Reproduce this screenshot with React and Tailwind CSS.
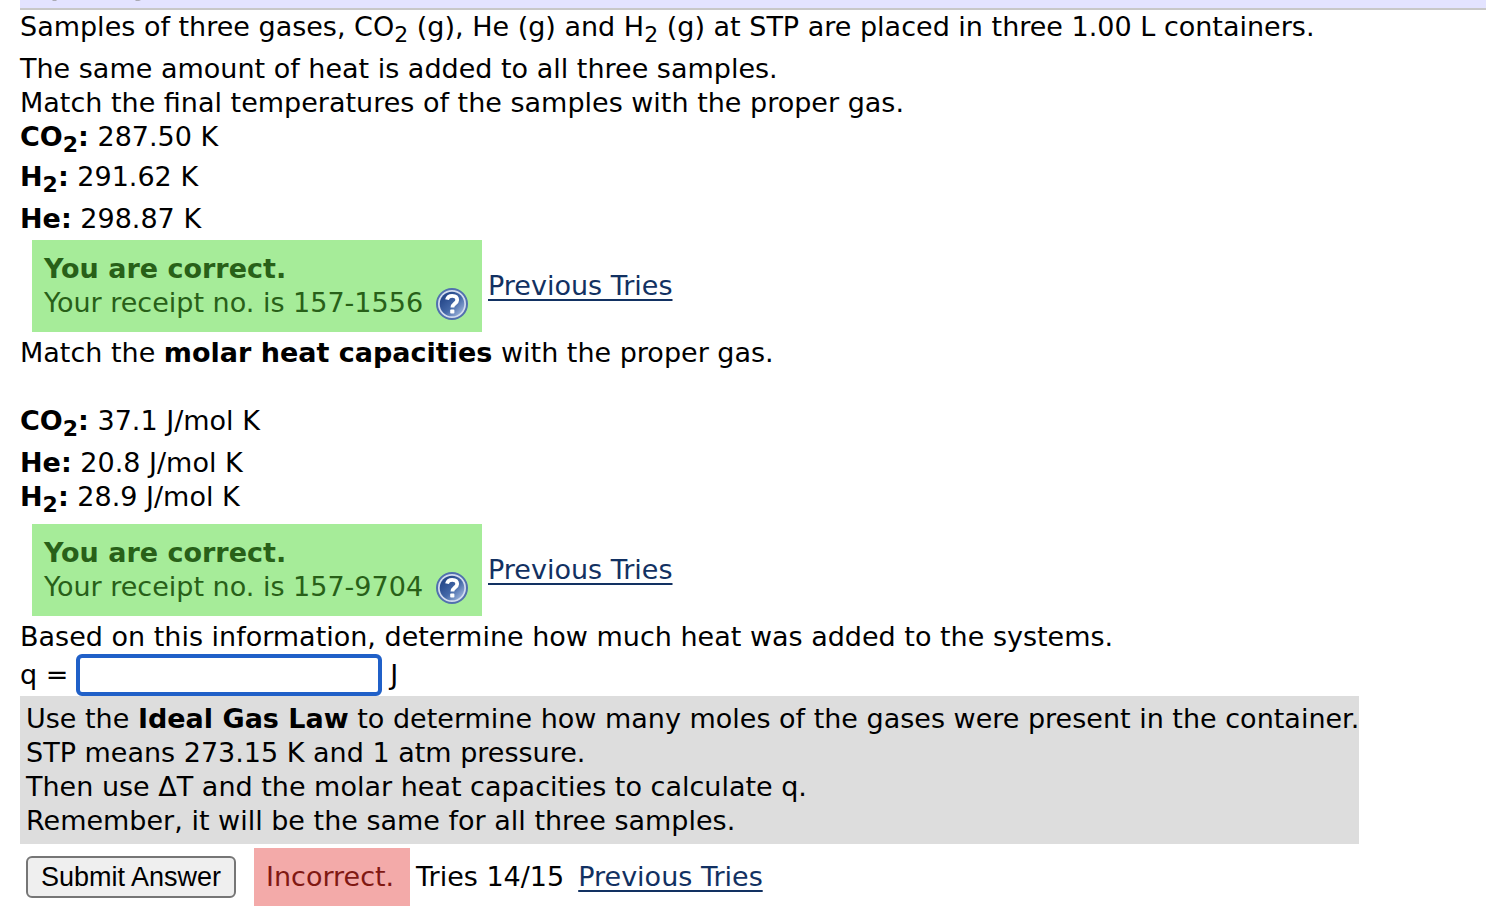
import { useId } from "react";

function Formula({ base, sub }) {
  return (
    <>
      {base}
      {sub && <sub className="relative bottom-0 align-[-6px] text-[22px] leading-none">{sub}</sub>}
    </>
  );
}

function Match({ base, sub, value, className }) {
  return (
    <p className={className}>
      <b>
        <Formula base={base} sub={sub} />:
      </b>{" "}
      {value}
    </p>
  );
}

function HelpIcon() {
  const id = useId();
  return (
    <svg viewBox="0 0 32 32" className="size-8" aria-hidden="true">
      <defs>
        <linearGradient id={id} x1="0" y1="0" x2="1" y2="1">
          <stop offset="0.2" stopColor="#284a8c" />
          <stop offset="0.55" stopColor="#4468a8" />
          <stop offset="0.9" stopColor="#9db4dc" />
        </linearGradient>
      </defs>
      <circle cx="16" cy="16" r="15" fill="#d3dcef" stroke="#5170ae" strokeWidth="2" />
      <circle cx="16" cy="16" r="12.3" fill={`url(#${id})`} />
      <path
        d="M11 11.6C11.6 9 13.400 7.800 16.200 7.800c3.200 0 5 1.600 5 4.100 0 3.500-4.800 3.700-4.800 7.600"
        fill="none"
        stroke="#fff"
        strokeWidth="3.800"
      />
      <rect x="14.200" y="21.600" width="4.200" height="4" rx="0.800" fill="#fff" />
    </svg>
  );
}

function PreviousTries() {
  return (
    <a href="#tries" className="text-[#123162] underline decoration-2 underline-offset-4">
      Previous Tries
    </a>
  );
}

function Correct({ receipt }) {
  return (
    <div className="my-1 ml-3 flex items-center gap-1.5">
      <div className="w-[450px] bg-[#a6ec99] px-3 py-3 pr-3.5 text-[#286018]">
        <p className="font-bold">You are correct.</p>
        <p className="flex justify-between">
          Your receipt no. is {receipt}
          <a href="#help" aria-label="Help" className="mt-0.5">
            <HelpIcon />
          </a>
        </p>
      </div>
      <PreviousTries />
    </div>
  );
}

export default function App() {
  return (
    <main className="min-h-screen bg-white pl-5 font-['DejaVu_Sans',Verdana,sans-serif] text-[27px] leading-[34px] text-black">
      <header className="h-2.5 border-b-2 border-[#c8c8c8] bg-[#e3e3ff]">
        <svg viewBox="0 0 130 8" className="h-2 w-[130px]" aria-hidden="true">
          <path d="M32 0h5l-1 1h-3zM115 0h6l-2 1h-3z" fill="#aaaab4" />
        </svg>
      </header>
      <p className="min-h-[42px]">
        Samples of three gases, <Formula base="CO" sub="2" /> (g), He (g) and <Formula base="H" sub="2" /> (g) at STP
        are placed in three 1.00 L containers.
      </p>
      <p>The same amount of heat is added to all three samples.</p>
      <p>Match the final temperatures of the samples with the proper gas.</p>
      <Match base="CO" sub="2" value="287.50 K" className="min-h-10" />
      <Match base="H" sub="2" value="291.62 K" className="min-h-[42px]" />
      <Match base="He" value="298.87 K" />
      <Correct receipt="157-1556" />
      <p className="mb-[34px]">
        Match the <b>molar heat capacities</b> with the proper gas.
      </p>
      <Match base="CO" sub="2" value="37.1 J/mol K" className="min-h-[42px]" />
      <Match base="He" value="20.8 J/mol K" />
      <Match base="H" sub="2" value="28.9 J/mol K" className="min-h-10" />
      <Correct receipt="157-9704" />
      <p>Based on this information, determine how much heat was added to the systems.</p>
      <form onSubmit={(e) => e.preventDefault()}>
        <div className="flex items-center gap-2">
          <label htmlFor="q">q =</label>
          <input
            id="q"
            type="text"
            className="h-[42px] w-[306px] rounded-md border-4 border-[#2060c8] bg-white px-1 outline-none"
          />
          <span>J</span>
        </div>
        <div className="w-fit bg-[#dddddd] py-1.5 pl-1.5">
          <p>
            Use the <b>Ideal Gas Law</b> to determine how many moles of the gases were present in the container.
          </p>
          <p>STP means 273.15 K and 1 atm pressure.</p>
          <p>Then use ΔT and the molar heat capacities to calculate q.</p>
          <p>Remember, it will be the same for all three samples.</p>
        </div>
        <div className="mt-1 ml-1.5 flex items-center">
          <button
            type="submit"
            className="h-[42px] w-[210px] rounded-md border-2 border-[#767676] bg-[#efefef] font-['Liberation_Sans',Arial,sans-serif] text-[27px]"
          >
            Submit Answer
          </button>
          <span className="mr-1.5 ml-[18px] w-[156px] bg-[#f3aaa9] p-3 text-[#801812]">Incorrect.</span>
          <span className="mr-3.5">Tries 14/15</span>
          <PreviousTries />
        </div>
      </form>
    </main>
  );
}
